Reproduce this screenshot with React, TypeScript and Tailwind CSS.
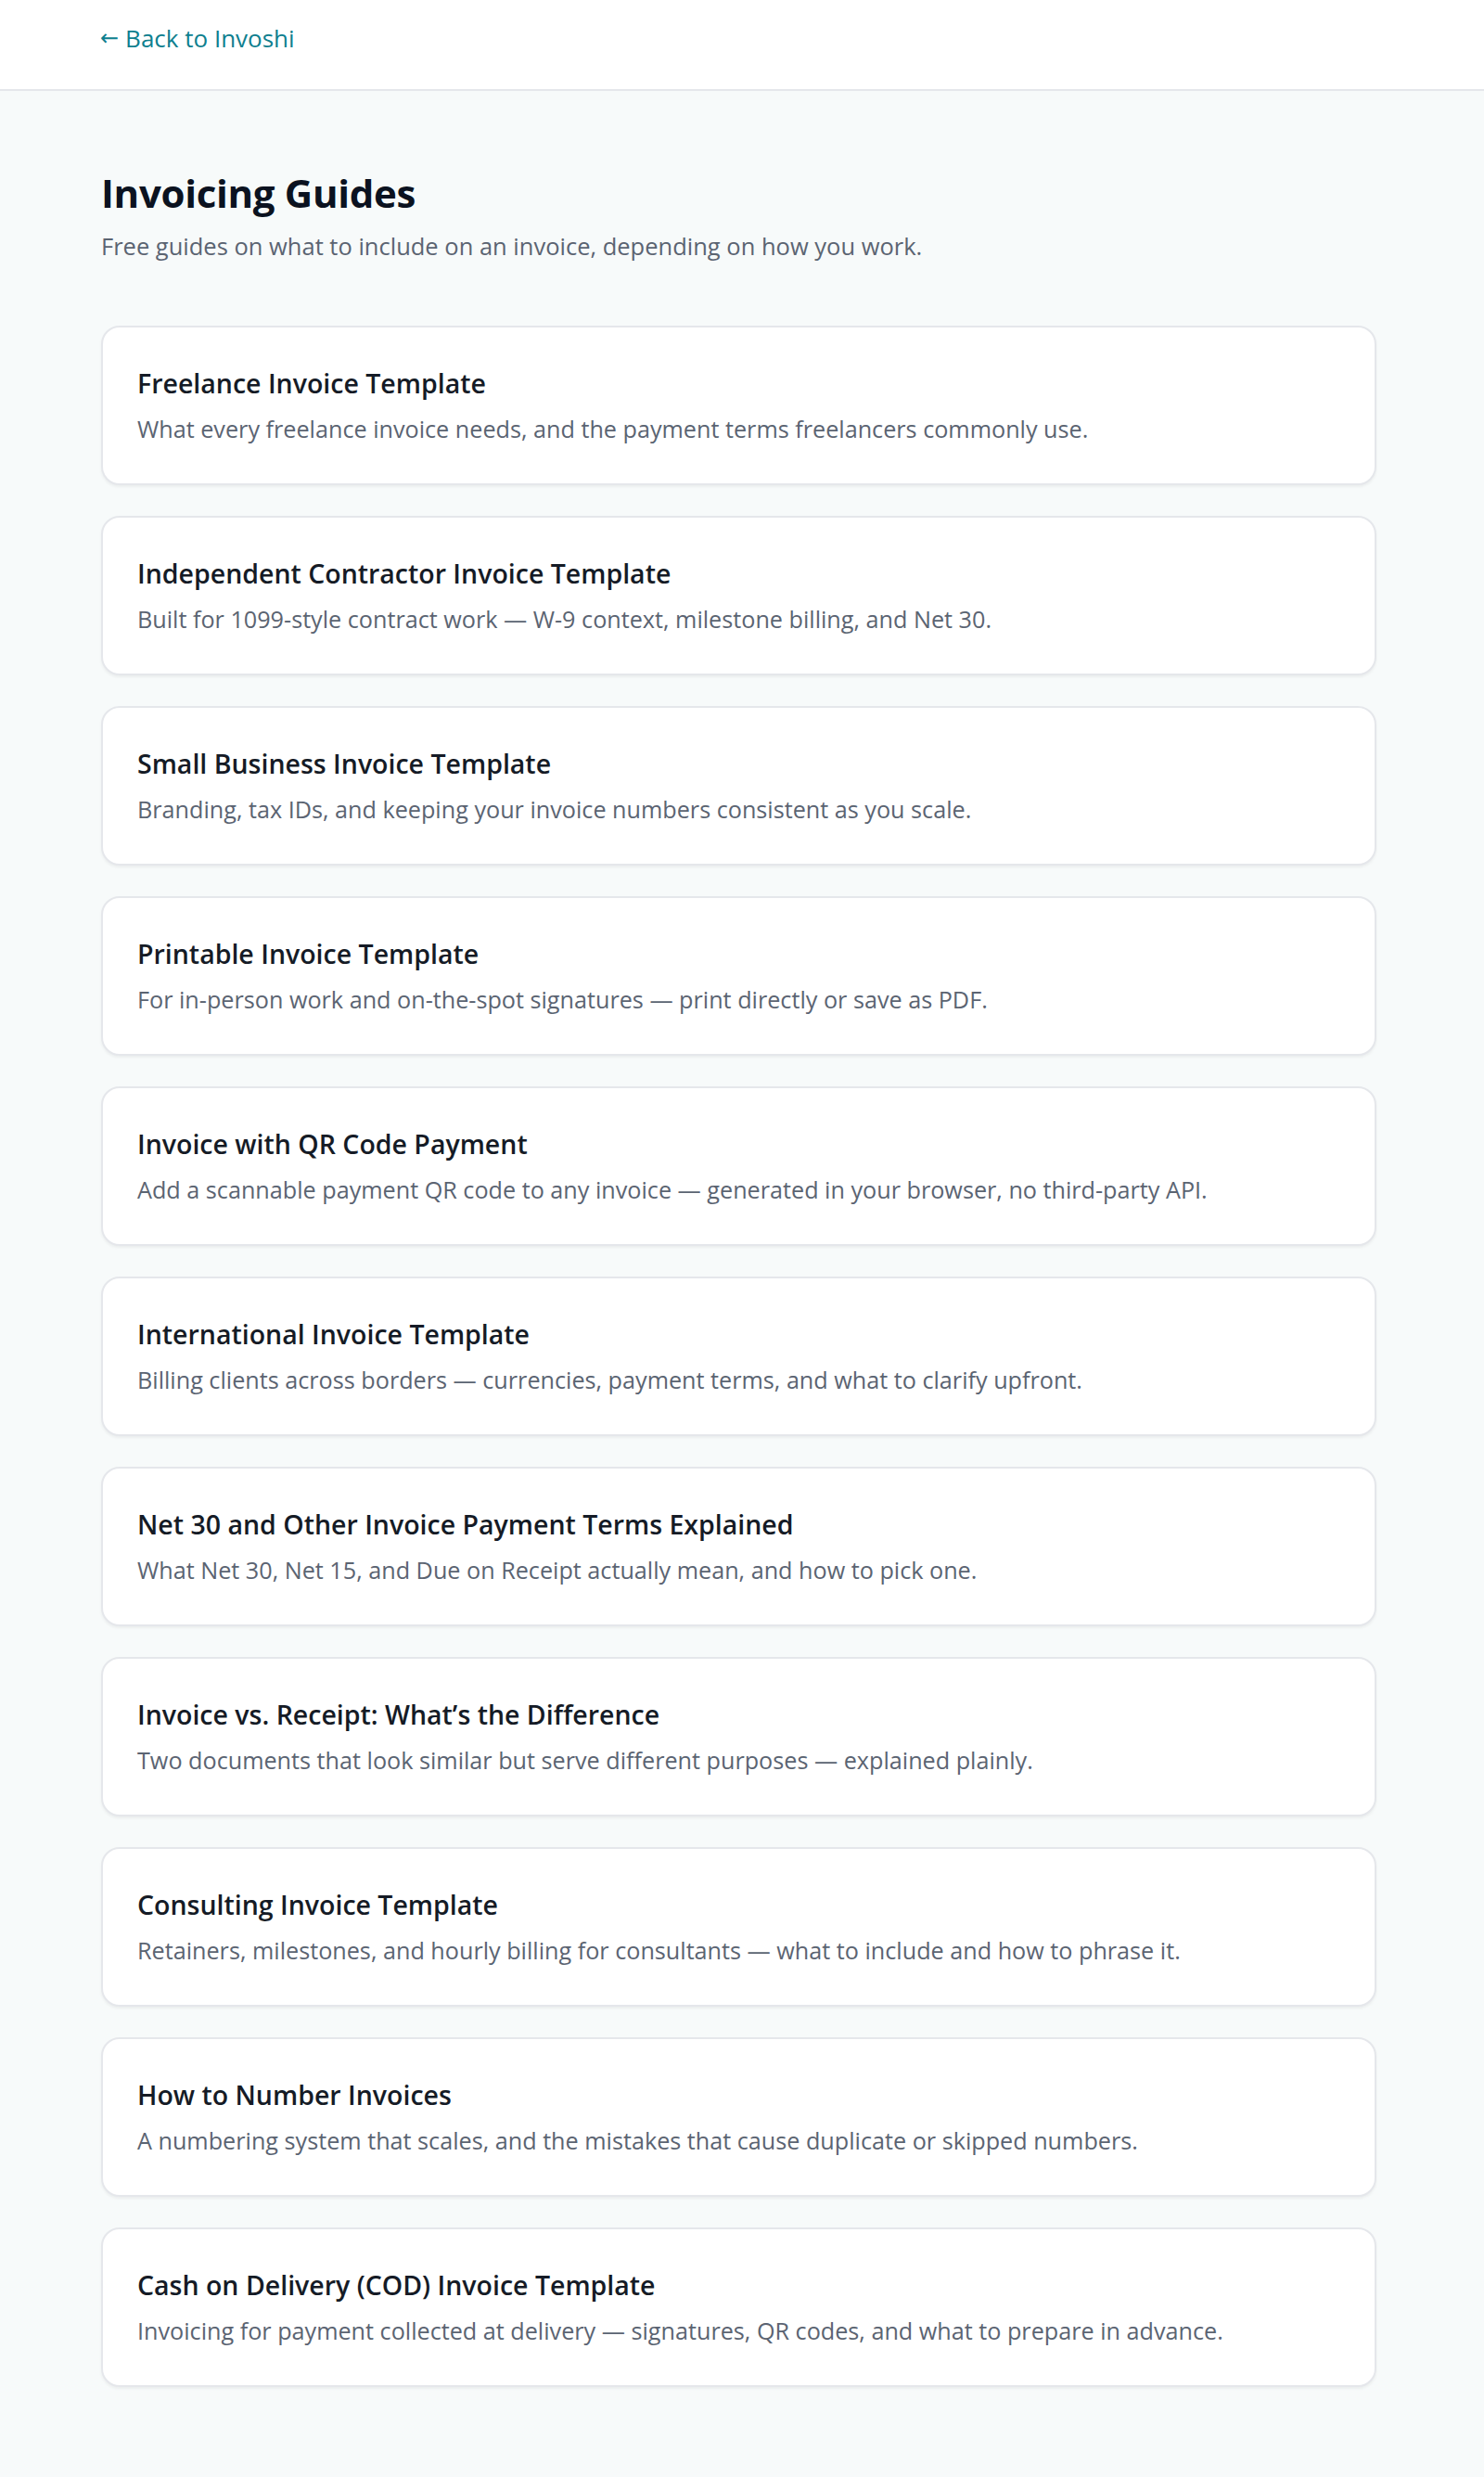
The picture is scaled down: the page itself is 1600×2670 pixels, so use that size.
const guides = [
  {
    title: 'Freelance Invoice Template',
    desc: 'What every freelance invoice needs, and the payment terms freelancers commonly use.',
  },
  {
    title: 'Independent Contractor Invoice Template',
    desc: 'Built for 1099-style contract work — W-9 context, milestone billing, and Net 30.',
  },
  {
    title: 'Small Business Invoice Template',
    desc: 'Branding, tax IDs, and keeping your invoice numbers consistent as you scale.',
  },
  {
    title: 'Printable Invoice Template',
    desc: 'For in-person work and on-the-spot signatures — print directly or save as PDF.',
  },
  {
    title: 'Invoice with QR Code Payment',
    desc: 'Add a scannable payment QR code to any invoice — generated in your browser, no third-party API.',
  },
  {
    title: 'International Invoice Template',
    desc: 'Billing clients across borders — currencies, payment terms, and what to clarify upfront.',
  },
  {
    title: 'Net 30 and Other Invoice Payment Terms Explained',
    desc: 'What Net 30, Net 15, and Due on Receipt actually mean, and how to pick one.',
  },
  {
    title: 'Invoice vs. Receipt: What’s the Difference',
    desc: 'Two documents that look similar but serve different purposes — explained plainly.',
  },
  {
    title: 'Consulting Invoice Template',
    desc: 'Retainers, milestones, and hourly billing for consultants — what to include and how to phrase it.',
  },
  {
    title: 'How to Number Invoices',
    desc: 'A numbering system that scales, and the mistakes that cause duplicate or skipped numbers.',
  },
  {
    title: 'Cash on Delivery (COD) Invoice Template',
    desc: 'Invoicing for payment collected at delivery — signatures, QR codes, and what to prepare in advance.',
  },
];

export default function App() {
  return (
    <div className="min-h-screen bg-[#f7fafa] font-['Open_Sans','Noto_Sans',sans-serif]">
      <header className="bg-white border-b-2 border-[#e5e7eb]">
        <div className="pl-[108px] pr-[116px] pt-[23px] pb-[37px]">
          <a href="#" className="flex items-center gap-[7px] h-[36px] w-fit text-[26px] text-[#0e7f8f]">
            <span className="font-['DejaVu_Sans',sans-serif] text-[24px] leading-none">←</span>
            <span className="leading-none">Back to Invoshi</span>
          </a>
        </div>
      </header>

      <main className="pl-[109px] pr-[116px] pt-[86px] pb-[95px]">
        <h1 className="text-[42px] leading-[48px] font-bold text-[#0b1220] tracking-[-0.3px]">
          Invoicing Guides
        </h1>
        <p className="mt-[15px] text-[25.5px] leading-[36px] text-[#5b6472]">
          Free guides on what to include on an invoice, depending on how you work.
        </p>

        <div className="mt-[68px] flex flex-col gap-[33px]">
          {guides.map((g) => (
            <a
              key={g.title}
              href="#"
              className="block bg-white border-2 border-[#e5e7eb] rounded-[20px] shadow-[0_2px_3px_rgba(0,0,0,0.05)] px-[37px] pt-[40px] pb-[40px]"
            >
              <h2 className="text-[28.5px] leading-[40px] font-semibold text-[#151b26]">
                {g.title}
              </h2>
              <p className="mt-[10px] text-[25.2px] leading-[38px] text-[#5b6472]">
                {g.desc}
              </p>
            </a>
          ))}
        </div>
      </main>
    </div>
  );
}
